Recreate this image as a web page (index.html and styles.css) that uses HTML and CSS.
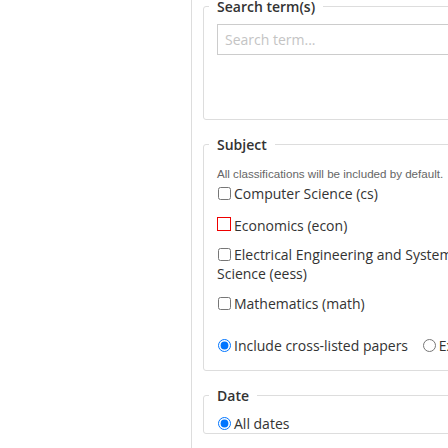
FILE: index.html
```html
<!DOCTYPE html>
<html lang="en">
<head>
<meta charset="utf-8">
<title>Search</title>
<link rel="stylesheet" href="styles.css">
</head>
<body>
<div class="page">
  <aside class="sidebar"></aside>
  <main class="main">
    <fieldset class="group group-search">
      <legend class="group-title">Search term(s)</legend>
      <input class="search-input" type="text" placeholder="Search term...">
    </fieldset>

    <fieldset class="group group-subject">
      <legend class="group-title">Subject</legend>
      <p class="note">All classifications will be included by default.</p>
      <label class="option"><input class="box" type="checkbox">Computer Science (cs)</label>
      <label class="option option-econ"><input class="box box-invalid" type="checkbox">Economics (econ)</label>
      <label class="option option-eess"><input class="box" type="checkbox">Electrical Engineering and Systems Science (eess)</label>
      <label class="option option-math"><input class="box" type="checkbox">Mathematics (math)</label>
      <div class="radio-row">
        <label class="option option-inline"><input class="box" type="radio" name="cross" checked>Include cross-listed papers</label>
        <label class="option option-inline"><input class="box" type="radio" name="cross">Exclude cross-listed papers</label>
      </div>
    </fieldset>

    <fieldset class="group group-date">
      <legend class="group-title">Date</legend>
      <label class="option option-date"><input class="box" type="radio" name="date" checked>All dates</label>
    </fieldset>
  </main>
</div>
</body>
</html>
```

FILE: styles.css
```css
* {
  box-sizing: border-box;
}

html, body {
  margin: 0;
  padding: 0;
  overflow: hidden;
  background: #fff;
}

body {
  font-family: "Open Sans", "DejaVu Sans", sans-serif;
  font-size: 14px;
  color: #333;
}

.page {
  display: flex;
  min-height: 100vh;
}

.sidebar {
  width: 191px;
  flex: 0 0 191px;
}

.main {
  flex: 0 0 320px;
  width: 320px;
  border-left: 1px solid #ddd;
  padding-left: 11px;
  min-height: 100vh;
}

.group {
  margin: 18px 0 0;
  padding: 11px 13px 0;
  border: 1px solid #ddd;
  border-radius: 3px;
  min-width: 0;
}

.group-search {
  margin-top: 0;
  padding-bottom: 64px;
}

.group-subject {
  padding-bottom: 15px;
}

.group-title {
  margin-left: -8px;
  padding: 0 8px;
  font-size: 14px;
  line-height: 13px;
  font-weight: 600;
  color: #333;
}

.search-input {
  display: block;
  width: 100%;
  height: 31px;
  margin: 0;
  padding: 0 7px;
  border: 1px solid #ccc;
  border-radius: 0;
  font-family: "Open Sans", "DejaVu Sans", sans-serif;
  font-size: 14px;
  color: #333;
  background: #fff;
}

.search-input::placeholder {
  color: #c4c4c4;
}

.note {
  margin: 5px 0 3px;
  font-family: "Liberation Sans", Arial, sans-serif;
  font-size: 11.6px;
  line-height: 14px;
  color: #666;
}

.option {
  display: block;
  line-height: 19px;
  color: #333;
}

.box {
  vertical-align: top;
  width: 13px;
  height: 13px;
  margin: 3px 3px 0 1px;
}

.box-invalid {
  appearance: none;
  -webkit-appearance: none;
  width: 14px;
  height: 14px;
  margin: 1px 3px 0 0;
  border: 1px solid #e00;
  border-radius: 0;
  background: #fff;
}

.option-econ {
  margin-top: 13px;
}

.option-eess {
  margin-top: 10px;
}

.option-math {
  margin-top: 11px;
}

.radio-row {
  margin-top: 23px;
  white-space: nowrap;
}

.option-inline {
  display: inline-block;
  margin-right: 10px;
}

.option-date {
  margin-top: 1px;
}
```
